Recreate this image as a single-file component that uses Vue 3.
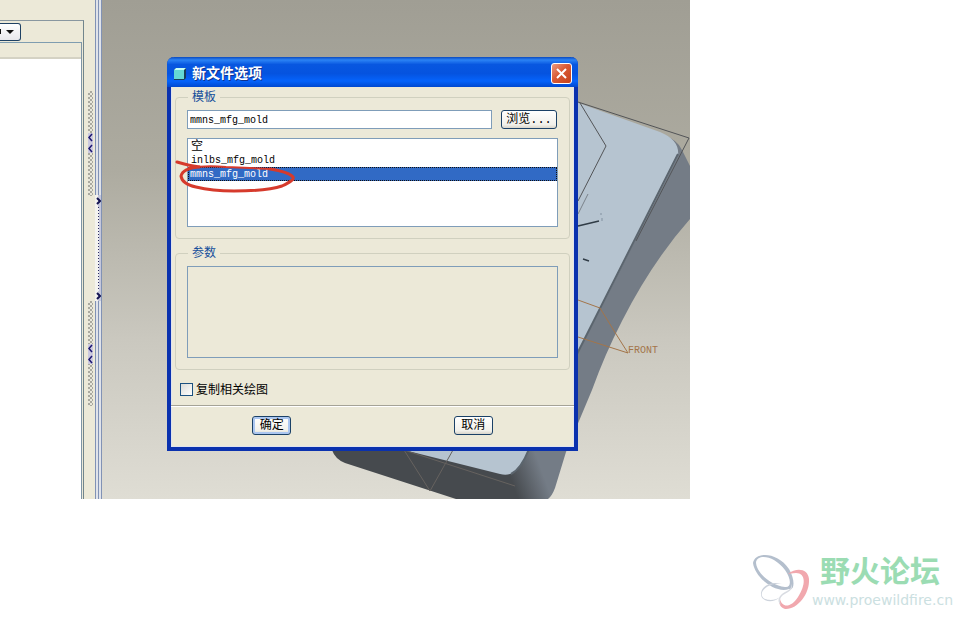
<script setup>
import { ref } from 'vue'

const templates = ['空', 'inlbs_mfg_mold', 'mmns_mfg_mold']
const selected = ref('mmns_mfg_mold')
const copyDrawings = ref(false)
</script>

<template>
  <div class="page">
    <main class="workspace">
      <!-- Model tree, cut off on the left -->
      <section class="tree">
        <div class="tree-panel">
          <div class="tree-tools">
            <button class="tree-menu" type="button" aria-label="menu">
              <svg width="18" height="8" viewBox="0 0 18 8">
                <path d="M0 1h1v5H0z" fill="#111" />
                <path d="M6 2h8l-4 4z" fill="#111" />
              </svg>
            </button>
          </div>
          <div class="tree-body">
            <div class="tree-head"></div>
          </div>
        </div>
      </section>

      <div class="gutter">
        <div v-for="n in 2" :key="n" class="grip">
          <svg class="grip-arrows" width="5" height="20" viewBox="0 0 5 20">
            <path d="M4 1L1 4.500L4 8M4 12L1 15.500L4 19" fill="none" stroke="#1c1670" stroke-width="1.500" />
          </svg>
        </div>
      </div>

      <div class="sash">
        <div class="sash-handle">
          <svg width="5" height="8" viewBox="0 0 5 8"><path d="M1 1L4 4L1 7" /></svg>
          <span class="sash-dots"></span>
          <svg width="5" height="8" viewBox="0 0 5 8"><path d="M1 1L4 4L1 7" /></svg>
        </div>
      </div>

      <section class="viewport">
        <svg class="model" viewBox="102 0 588 499" preserveAspectRatio="xMinYMin slice">
          <defs>
            <linearGradient id="corner" gradientUnits="userSpaceOnUse" x1="512" y1="482" x2="542" y2="471">
              <stop offset="0" stop-color="#464a4e" />
              <stop offset="1" stop-color="#747c86" />
            </linearGradient>
          </defs>
          <path d="M660 133Q678 140 682 150L690 166V219Q652 262 622 321Q605 354 592 390L566 452L555 488Q552 496 548 499H456L345 463Q335 459 332 450L560 360Z" fill="url(#corner)" />
          <path d="M570 100L660 132Q680 140 678 156L527 453Q517 479 500 474L492 472L404 450Z" fill="#b6c4d0" />
          <path d="M678 154L529 449Q521 469 511 474" fill="none" stroke="#5b656e" stroke-width="2" />
          <g fill="none" stroke="#535558">
            <path d="M578 102L689 138L636 241" />
            <path d="M580 103L606 146L578 201" />
            <path d="M588 194L578 214" stroke="#7b838b" />
            <path d="M578 226L599 221M583 259L589 261" stroke="#303c46" stroke-width="1.500" />
            <path d="M601 213v2M602 218v3" stroke="#8291a0" />
            <path d="M404 450L430 491L453 450M404 450L515 486" stroke="#66625f" />
          </g>
          <path d="M578 300L600 308L616 334L628 353L578 337" fill="none" stroke="#a3754a" />
          <text x="628" y="353" class="datum">FRONT</text>
        </svg>

        <form class="dialog" @submit.prevent>
          <header class="titlebar">
            <svg width="14" height="14" viewBox="0 0 14 14">
              <path d="M1 3L3 1H13V11L11 13H1z" fill="#183e58" />
              <path d="M1 3h10v9H1z" fill="#65d9d4" />
              <path d="M3 1h10l-2 2H1z" fill="#c8fff5" />
            </svg>
            <h1>新文件选项</h1>
            <button class="close" type="button" aria-label="关闭">
              <svg width="13" height="13" viewBox="0 0 13 13">
                <path d="M2 2L11 11M11 2L2 11" stroke="#fff" stroke-width="2" />
              </svg>
            </button>
          </header>

          <div class="content">
            <fieldset>
              <legend>模板</legend>
              <div class="name-row">
                <input v-model="selected" class="name" type="text" aria-label="模板">
                <button class="btn browse" type="button">浏览...</button>
              </div>
              <div class="list-wrap">
                <ul class="list">
                  <li
                    v-for="t in templates"
                    :key="t"
                    :class="{ active: t === selected }"
                    @click="selected = t"
                  >{{ t }}</li>
                </ul>
                <!-- Hand-drawn red mark -->
                <svg class="mark" width="124" height="40" viewBox="174 158 124 40">
                  <path d="M177 162Q190 166 200 167Q183 168 181 176Q182 184 196 187Q212 191 234 191Q268 191 282 186Q295 180 293 177Q289 172 270 169" />
                  <path d="M189 168Q206 165 226 167Q250 168 270 169" class="thin" />
                </svg>
              </div>
            </fieldset>

            <fieldset class="params">
              <legend>参数</legend>
              <div class="param-box"></div>
            </fieldset>

            <label class="check">
              <input v-model="copyDrawings" type="checkbox">
              复制相关绘图
            </label>
          </div>

          <footer class="actions">
            <button class="btn default" type="submit">确定</button>
            <button class="btn" type="button">取消</button>
          </footer>
        </form>
      </section>
    </main>

    <footer class="brand">
      <svg width="60" height="60" viewBox="0 0 60 60">
        <g fill-rule="evenodd">
          <path d="M1 9C3-3 26-2 37 15C43 25 43 37 37 35C24 40 3 24 1 9zM4 8C4 18 18 31 33 33C40 34 39 24 33 16C23 2 6-1 4 8z" fill="#b4bfcd" />
          <path d="M36 20C45 13 56 15 57 25C58 40 45 56 33 55C26 53 27 46 28 45C30 54 39 54 46 43C54 31 54 19 44 19C40 19 38 20 36 20z" fill="#f1a8ae" />
          <path d="M30 30C18 28 8 36 10 42C12 47 23 47 28 43C20 51 8 47 9 39C10 31 21 27 30 30z" fill="#cdd3dc" />
          <path d="M39 30C43 36 35 38 30 42C27 45 28 49 29 51C24 47 27 41 33 38C39 35 40 33 39 30z" fill="#d9dce2" />
        </g>
      </svg>
      <div class="brand-text">
        <strong>野火论坛</strong>
        <a href="#">www.proewildfire.cn</a>
      </div>
    </footer>
  </div>
</template>

<style>
body {
  margin: 0;
  background: #fff;
}
</style>

<style scoped>
.page {
  font-family: "Liberation Mono", "Noto Sans CJK SC", monospace;
  font-size: 12px;
  color: #000;
}

.page * {
  box-sizing: border-box;
}

.workspace {
  display: flex;
  min-height: 499px;
  margin-right: 272px;
  background: #ece9d8;
}

/* Left side */
.tree {
  display: flex;
  width: 84px;
  padding-top: 20px;
}

.tree-panel {
  display: flex;
  flex: 1;
  flex-direction: column;
  border-top: 1px solid #8997a0;
  border-right: 1px solid #71858c;
}

.tree-tools {
  height: 21px;
  padding-top: 2px;
}

.tree-menu {
  display: flex;
  align-items: center;
  width: 21px;
  height: 18px;
  padding: 0;
  border: 1px solid #1f4163;
  border-left: 0;
  border-radius: 0 3px 3px 0;
  background: linear-gradient(#fff, #e8e8ec);
}

.tree-body {
  flex: 1;
  margin-right: 1px;
  border-top: 1px solid #7f9db0;
  border-right: 1px solid #7f95a5;
  background: #fff;
}

.tree-head {
  height: 16px;
  border-bottom: 2px solid #d4d2c4;
  background: #ece9d8;
}

.gutter {
  display: flex;
  flex-direction: column;
  gap: 105px;
  width: 11px;
  padding: 91px 2px 0 4px;
}

.grip {
  display: flex;
  align-items: center;
  height: 105px;
  background: repeating-conic-gradient(#aaa99f 0 25%, #e8e7dc 0 50%) 0 0 / 4px 4px;
}

.grip:first-child {
  padding-bottom: 1px;
}

.grip-arrows {
  background: #cbc9df;
}

.sash {
  display: flex;
  flex-direction: column;
  width: 7px;
  padding-top: 195px;
  background: linear-gradient(90deg, #8192b5 1px, #e0e3ea 1px 3px, #8192b5 3px 4px, #e0e3ea 4px 6px, #8192b5 6px);
}

.sash-handle {
  display: flex;
  flex-direction: column;
  justify-content: space-between;
  align-items: center;
  height: 106px;
  padding: 2px 0 1px;
  background: linear-gradient(90deg, #f4f3ef 3px, #c5c7dc 3px 6px, #8192b5 6px);
}

.sash-handle path {
  fill: none;
  stroke: #151552;
  stroke-width: 2;
}

.sash-dots {
  width: 1px;
  height: 84px;
  background: repeating-linear-gradient(#29295f 0 1px, #f0f0f0 1px 3px);
}

/* 3D area */
.viewport {
  position: relative;
  flex: 1;
  overflow: hidden;
  background: linear-gradient(#a09e94, #adaba0 34%, #cac8bf 68%, #dfddd4);
}

.model {
  position: absolute;
  top: 0;
  left: 0;
  width: 100%;
  height: 100%;
}

.datum {
  font-size: 10px;
  fill: #a3754a;
}

/* Dialog */
.dialog {
  position: absolute;
  top: 57px;
  left: 65px;
  width: 411px;
  border: 4px solid #0a31ae;
  border-top: 0;
  border-radius: 7px 7px 0 0;
  background: #ece9d8;
  box-shadow: inset 0 0 0 1px #dfe3ee;
}

.titlebar {
  display: flex;
  align-items: center;
  gap: 5px;
  height: 30px;
  margin: 0 -4px;
  padding: 3px 6px 0;
  border-radius: 7px 7px 0 0;
  background: linear-gradient(#0b49bd, #2b83f5 10%, #0857e0 25%, #0553df 55%, #0563fb 80%, #0148cf);
}

.titlebar h1 {
  flex: 1;
  margin: 0;
  font-size: 14px;
  line-height: 16px;
  color: #fff;
  text-shadow: 1px 1px #10328e;
}

.close {
  display: flex;
  align-items: center;
  justify-content: center;
  width: 21px;
  height: 21px;
  padding: 0;
  border: 1px solid #fff;
  border-radius: 3px;
  background: linear-gradient(135deg, #eb9a82, #d95a35 45%, #c4421c);
}

.content {
  padding: 2px 4px 6px;
}

fieldset {
  min-width: 0;
  margin: 0;
  padding: 5px 11px 11px;
  border: 1px solid #d0d0bf;
  border-radius: 4px;
}

.params {
  margin-top: 6px;
}

legend {
  margin-left: 1px;
  padding: 2px 4px 0;
  font-size: 12px;
  line-height: 14px;
  color: #164f9b;
}

.name-row {
  display: flex;
  gap: 9px;
}

.name {
  flex: 1;
  min-width: 0;
  height: 19px;
  padding: 1px 2px 0;
  border: 1px solid #7f9db9;
  outline: 0;
  background: #fff;
  font: inherit;
  font-size: 10px;
}

.btn {
  width: 39px;
  height: 19px;
  padding: 1px 0 0;
  border: 1px solid #1b4167;
  border-radius: 3px;
  background: linear-gradient(#fff, #f1f0ea 80%, #d9d5cb);
  font: inherit;
  line-height: 16px;
  color: #000;
}

.browse {
  width: 56px;
  margin-right: 1px;
}

.default {
  box-shadow: inset 0 0 0 2px #abc6f0;
}

.list-wrap {
  position: relative;
  margin-top: 9px;
}

.list {
  height: 89px;
  margin: 0;
  padding: 0;
  border: 1px solid #7f9db9;
  background: #fff;
  font-size: 10px;
  line-height: 16px;
  list-style: none;
}

.list li {
  height: 14px;
  padding: 0 3px;
}

.list li:first-child {
  font-size: 12px;
}

.list .active {
  padding: 0 2px;
  outline: 1px dotted #111;
  outline-offset: -1px;
  background: #316ac5;
  color: #fff;
}

.mark {
  position: absolute;
  top: 20px;
  left: -13px;
  pointer-events: none;
}

.mark path {
  fill: none;
  stroke: #d63a2c;
  stroke-width: 3;
  stroke-linecap: round;
}

.mark .thin {
  stroke-width: 2;
}

.param-box {
  height: 92px;
  border: 1px solid #7f9db9;
}

.check {
  display: flex;
  align-items: flex-start;
  gap: 3px;
  margin-top: 13px;
  padding-left: 5px;
  line-height: 16px;
}

.check input {
  appearance: none;
  width: 13px;
  height: 13px;
  margin: 0;
  border: 1px solid #1c5180;
  background: linear-gradient(135deg, #dcdcd7, #fff);
}

.check input:checked {
  background: #21a121;
}

.actions {
  display: grid;
  grid-template-columns: 1fr 1fr;
  justify-items: center;
  padding: 10px 0 12px;
  border-top: 1px solid #a5a397;
  box-shadow: inset 0 1px #fff;
}

/* Forum logo */
.brand {
  display: flex;
  justify-content: flex-end;
  padding: 55px 9px 0 0;
}

.brand-text {
  display: flex;
  flex-direction: column;
  align-items: flex-end;
  padding-top: 3px;
}

.brand strong {
  margin-right: 13px;
  font-size: 30px;
  line-height: 34px;
  color: #9bdcb3;
}

.brand a {
  font-family: "DejaVu Sans", sans-serif;
  font-size: 14px;
  line-height: 18px;
  color: #cbe0e1;
  text-decoration: none;
}
</style>
